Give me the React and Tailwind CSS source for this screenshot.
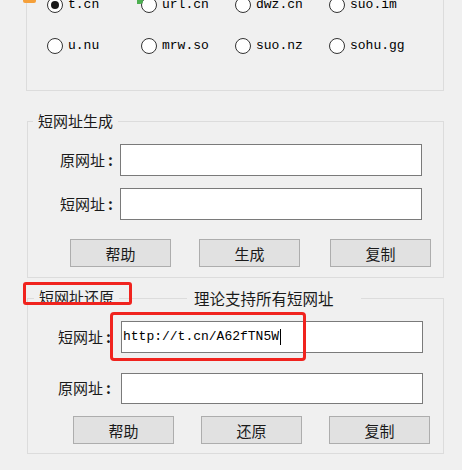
import React from "react";

const cjk = { fontFamily: '"Microsoft YaHei", "Noto Sans CJK SC", "Noto Sans", sans-serif' };
const mono = { fontFamily: '"Liberation Mono", "DejaVu Sans Mono", monospace' };

function Radio({ label, checked }) {
  return (
    <div className="flex items-center">
      <span className="w-[16px] h-[16px] rounded-full border border-[#333333] bg-white flex items-center justify-center shrink-0">
        {checked && <span className="w-[8px] h-[8px] rounded-full bg-[#1a1a1a]" />}
      </span>
      <span className="ml-[5px] text-[13px] leading-[16px] text-black" style={mono}>
        {label}
      </span>
    </div>
  );
}

function Field({ label, value, h = "h-[32px]", cursor, pr = "pr-[7px]" }) {
  return (
    <div className="flex items-center">
      <div className={`w-[92px] text-right ${pr} text-[15px] text-[#1a1a1a]`} style={cjk}>
        {label}
        <span className="ml-[3px] font-bold">:</span>
      </div>
      <div className={`w-[302px] ${h} bg-white border border-[#7a7a7a] flex items-center pl-[1px]`}>
        {value && (
          <span className="text-[13px] text-black leading-[16px]" style={mono}>
            {value}
          </span>
        )}
        {cursor && <span className="ml-[1px] w-[1px] h-[16px] bg-black" />}
      </div>
    </div>
  );
}

function Btn({ children, className = "" }) {
  return (
    <button
      className={`w-[101px] h-[28px] bg-[#e1e1e1] border border-[#adadad] text-[15px] text-[#1a1a1a] leading-none ${className}`}
      style={cjk}
    >
      {children}
    </button>
  );
}

export default function App() {
  const row1 = ["t.cn", "url.cn", "dwz.cn", "suo.im"];
  const row2 = ["u.nu", "mrw.so", "suo.nz", "sohu.gg"];

  return (
    <div className="relative w-[462px] h-[470px] bg-[#f0f0f0] overflow-hidden" style={cjk}>
      {/* cut-off decorations from above */}
      <div className="absolute left-[23px] top-0 w-[13px] h-[3px] bg-[#f5a03a] rounded-b-[2px]" />
      <div className="absolute left-[137px] top-0 w-[6px] h-[4px] bg-[#4caf50] rounded-br-[3px]" />

      {/* domain group */}
      <div className="ml-[26px] mt-[-40px] w-[418px] h-[131px] border border-[#dcdcdc] pl-[20px] pt-[36px]">
        <div className="grid grid-cols-[94px_94px_94px_94px] gap-y-[25px]">
          {row1.map((d, i) => (
            <Radio key={d} label={d} checked={i === 0} />
          ))}
          {row2.map((d) => (
            <Radio key={d} label={d} />
          ))}
        </div>
      </div>

      {/* generate group */}
      <div className="relative ml-[27px] mt-[30px] w-[417px] h-[157px] border border-[#dcdcdc] pt-[22px]">
        <div className="absolute left-[5px] top-[-11px] px-[5px] bg-[#f0f0f0] text-[15px] leading-[20px] text-[#1a1a1a]">
          短网址生成
        </div>
        <div className="flex flex-col gap-[12px]">
          <Field label="原网址" />
          <Field label="短网址" />
        </div>
        <div className="flex mt-[19px] ml-[42px]">
          <Btn>帮助</Btn>
          <Btn className="ml-[28px]">生成</Btn>
          <Btn className="ml-[30px]">复制</Btn>
        </div>
      </div>

      {/* restore group */}
      <div className="relative ml-[27px] mt-[20px] w-[417px] h-[156px] border border-[#dcdcdc] pt-[22px]">
        <div className="absolute left-[6px] top-[-9px] h-[14px] overflow-hidden px-[5px] bg-[#f0f0f0]">
          <div className="mt-[-3px] text-[15px] leading-[20px] text-[#1a1a1a]">短网址还原</div>
        </div>
        <div className="absolute left-[159px] top-[-12px] w-[174px] pl-[7px] bg-[#f0f0f0] text-[15.5px] leading-[22px] text-[#1a1a1a]">
          理论支持所有短网址
        </div>
        <div className="flex flex-col gap-[20px] ml-[1px]">
          <Field label="短网址" value="http://t.cn/A62fTN5W" cursor pr="pr-[10px]" />
          <Field label="原网址" h="h-[31px]" pr="pr-[10px]" />
        </div>
        <div className="flex mt-[12px] ml-[45px]">
          <Btn>帮助</Btn>
          <Btn className="ml-[27px]">还原</Btn>
          <Btn className="ml-[27px]">复制</Btn>
        </div>
      </div>

      {/* red annotation boxes */}
      <div className="absolute left-[23px] top-[282px] w-[109px] h-[23px] border-[3px] border-[#f0231e] rounded-[3px]" />
      <div className="absolute left-[110px] top-[312px] w-[196px] h-[49px] border-[3px] border-[#f0231e] rounded-[4px]" />
    </div>
  );
}
